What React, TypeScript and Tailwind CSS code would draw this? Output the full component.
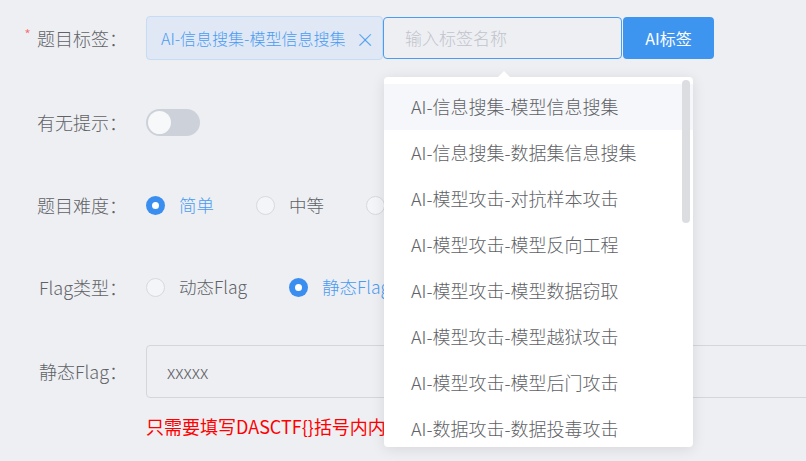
import React from "react";

const items = [
  "AI-信息搜集-模型信息搜集",
  "AI-信息搜集-数据集信息搜集",
  "AI-模型攻击-对抗样本攻击",
  "AI-模型攻击-模型反向工程",
  "AI-模型攻击-模型数据窃取",
  "AI-模型攻击-模型越狱攻击",
  "AI-模型攻击-模型后门攻击",
  "AI-数据攻击-数据投毒攻击",
];

function Label({ children, required }: { children: React.ReactNode; required?: boolean }) {
  return (
    <div className="w-[146px] shrink-0 pr-[19px] flex justify-end items-center text-[18px] text-[#606266]">
      {required && <span className="text-[#f56c6c] text-[15px] mr-[6px] -mt-[6px]">*</span>}
      <span>{children}</span>
    </div>
  );
}

function Radio({ checked, label, last }: { checked?: boolean; label: string; last?: boolean }) {
  return (
    <div className={`flex items-center ${last ? "" : "mr-[42px]"}`}>
      {checked ? (
        <span className="w-[19px] h-[19px] rounded-full bg-[#3a8ef0] flex items-center justify-center">
          <span className="w-[7px] h-[7px] rounded-full bg-white" />
        </span>
      ) : (
        <span className="w-[19px] h-[19px] rounded-full border border-[#d6d9df] bg-[#f4f5f8]" />
      )}
      <span className={`ml-[14px] text-[17.5px] ${checked ? "text-[#4a9cf2]" : "text-[#606266]"}`}>{label}</span>
    </div>
  );
}

export default function App() {
  return (
    <div
      className="relative w-[806px] h-[461px] overflow-hidden bg-[#eeeff3] font-light"
      style={{ fontFamily: '"Noto Sans CJK SC", "Noto Sans", sans-serif' }}
    >
      <div className="flex flex-col pt-[16px]">
        {/* row 1 */}
        <div className="flex h-[44px] items-center">
          <Label required>题目标签：</Label>
          <div className="flex items-center h-[44px]">
            <div className="h-[44px] w-[237px] rounded-[4px] border border-[#c6dbf4] bg-[#dfe8f4] flex items-center pl-[14px] text-[16px] text-[#4a9cf2]">
              <span>AI-信息搜集-模型信息搜集</span>
              <span className="ml-[10px] text-[19px] leading-none">×</span>
            </div>
            <div className="h-[42px] w-[239px] rounded-[4px] border border-[#4a9cf2] flex items-center pl-[21px] text-[17px] text-[#c0c4cc]">
              输入标签名称
            </div>
            <div className="h-[42px] w-[91px] ml-[1px] rounded-[4px] bg-[#3e95f0] flex items-center justify-center text-[16px] text-white font-normal">
              AI标签
            </div>
          </div>
        </div>
        {/* row 2 */}
        <div className="flex h-[44px] items-center mt-[40px]">
          <Label>有无提示：</Label>
          <div className="w-[54px] h-[27px] rounded-full bg-[#cdd1d9] flex items-center px-[2px]">
            <span className="w-[23px] h-[23px] rounded-full bg-[#f7f8fa]" />
          </div>
        </div>
        {/* row 3 */}
        <div className="flex h-[44px] items-center mt-[39px]">
          <Label>题目难度：</Label>
          <div className="flex items-center">
            <Radio checked label="简单" />
            <Radio label="中等" />
            <Radio label="困难" last />
          </div>
        </div>
        {/* row 4 */}
        <div className="flex h-[44px] items-center mt-[38px]">
          <Label>Flag类型：</Label>
          <div className="flex items-center">
            <Radio label="动态Flag" />
            <Radio checked label="静态Flag" last />
          </div>
        </div>
        {/* row 5 */}
        <div className="flex h-[53px] items-center mt-[36px]">
          <Label>静态Flag：</Label>
          <div className="h-[53px] w-[700px] shrink-0 rounded-[4px] border border-[#d3d6dc] flex items-center pl-[20px] text-[18px] text-[#606266]">
            xxxxx
          </div>
        </div>
        <div className="flex mt-[16px]">
          <div className="w-[146px] shrink-0" />
          <div className="text-[18px] text-[#ff0000] leading-[24px] font-normal">只需要填写DASCTF{"{}"}括号内内容</div>
        </div>
      </div>

      {/* dropdown */}
      <div className="absolute left-[384px] top-[77px] w-[309px] h-[370px] rounded-[4px] bg-white shadow-[0_2px_14px_0_rgba(0,0,0,0.10)]">
        <div className="absolute -top-[6px] left-[113px] w-0 h-0 border-l-[7px] border-r-[7px] border-b-[7px] border-l-transparent border-r-transparent border-b-white" />
        <div className="h-full overflow-hidden rounded-[4px] pt-[7px]">
          {items.map((t, i) => (
            <div
              key={t}
              className={`h-[46px] flex items-center pl-[27px] pb-[2px] text-[18px] text-[#606266] ${i === 0 ? "bg-[#f5f7fa]" : ""}`}
            >
              {t}
            </div>
          ))}
        </div>
        <div className="absolute right-[3px] top-[3px] w-[8px] h-[143px] rounded-full bg-[#dcdde0]" />
      </div>
    </div>
  );
}
